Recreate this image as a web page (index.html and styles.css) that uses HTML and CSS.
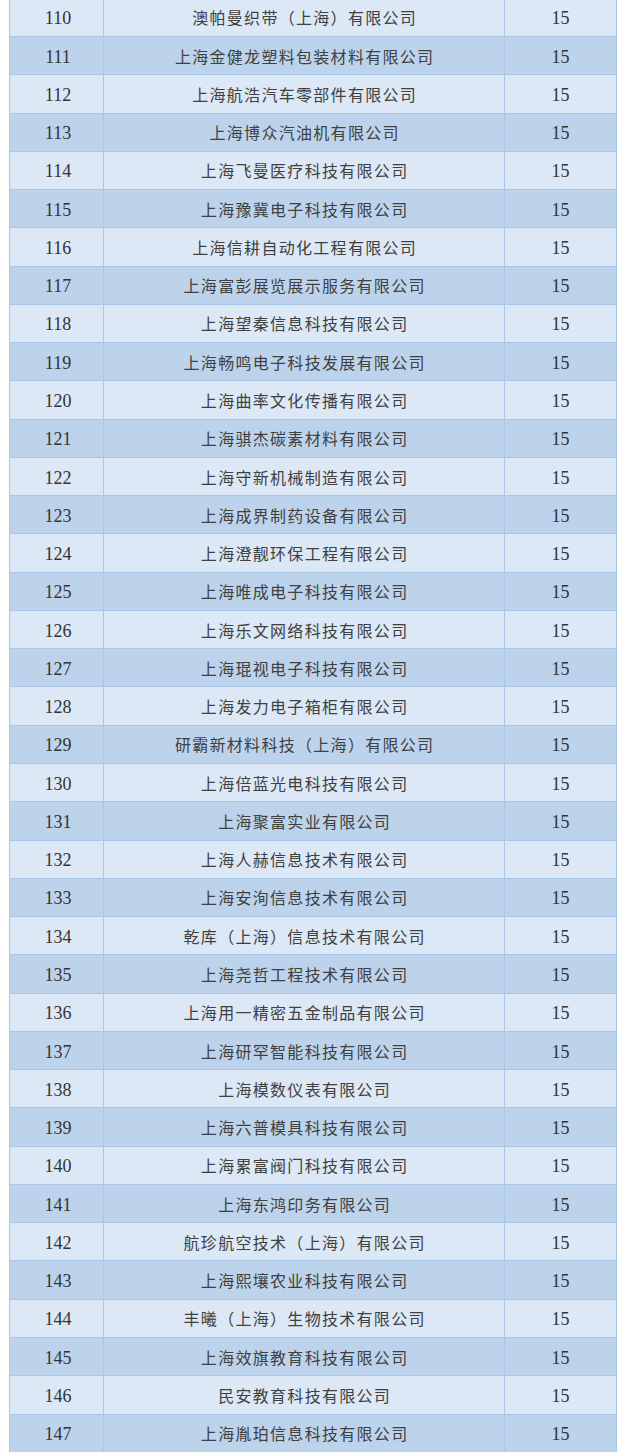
FILE: index.html
```html
<!DOCTYPE html>
<html lang="zh">
<head>
<meta charset="utf-8">
<link rel="stylesheet" href="styles.css">
</head>
<body>
<div class="table">
<div class="row light"><div class="c num">110</div><div class="c name">澳帕曼织带（上海）有限公司</div><div class="c score">15</div></div>
<div class="row dark"><div class="c num">111</div><div class="c name">上海金健龙塑料包装材料有限公司</div><div class="c score">15</div></div>
<div class="row light"><div class="c num">112</div><div class="c name">上海航浩汽车零部件有限公司</div><div class="c score">15</div></div>
<div class="row dark"><div class="c num">113</div><div class="c name">上海博众汽油机有限公司</div><div class="c score">15</div></div>
<div class="row light"><div class="c num">114</div><div class="c name">上海飞曼医疗科技有限公司</div><div class="c score">15</div></div>
<div class="row dark"><div class="c num">115</div><div class="c name">上海豫冀电子科技有限公司</div><div class="c score">15</div></div>
<div class="row light"><div class="c num">116</div><div class="c name">上海信耕自动化工程有限公司</div><div class="c score">15</div></div>
<div class="row dark"><div class="c num">117</div><div class="c name">上海富彭展览展示服务有限公司</div><div class="c score">15</div></div>
<div class="row light"><div class="c num">118</div><div class="c name">上海望秦信息科技有限公司</div><div class="c score">15</div></div>
<div class="row dark"><div class="c num">119</div><div class="c name">上海畅鸣电子科技发展有限公司</div><div class="c score">15</div></div>
<div class="row light"><div class="c num">120</div><div class="c name">上海曲率文化传播有限公司</div><div class="c score">15</div></div>
<div class="row dark"><div class="c num">121</div><div class="c name">上海骐杰碳素材料有限公司</div><div class="c score">15</div></div>
<div class="row light"><div class="c num">122</div><div class="c name">上海守新机械制造有限公司</div><div class="c score">15</div></div>
<div class="row dark"><div class="c num">123</div><div class="c name">上海成界制药设备有限公司</div><div class="c score">15</div></div>
<div class="row light"><div class="c num">124</div><div class="c name">上海澄靓环保工程有限公司</div><div class="c score">15</div></div>
<div class="row dark"><div class="c num">125</div><div class="c name">上海唯成电子科技有限公司</div><div class="c score">15</div></div>
<div class="row light"><div class="c num">126</div><div class="c name">上海乐文网络科技有限公司</div><div class="c score">15</div></div>
<div class="row dark"><div class="c num">127</div><div class="c name">上海琨视电子科技有限公司</div><div class="c score">15</div></div>
<div class="row light"><div class="c num">128</div><div class="c name">上海发力电子箱柜有限公司</div><div class="c score">15</div></div>
<div class="row dark"><div class="c num">129</div><div class="c name">研霸新材料科技（上海）有限公司</div><div class="c score">15</div></div>
<div class="row light"><div class="c num">130</div><div class="c name">上海倍蓝光电科技有限公司</div><div class="c score">15</div></div>
<div class="row dark"><div class="c num">131</div><div class="c name">上海聚富实业有限公司</div><div class="c score">15</div></div>
<div class="row light"><div class="c num">132</div><div class="c name">上海人赫信息技术有限公司</div><div class="c score">15</div></div>
<div class="row dark"><div class="c num">133</div><div class="c name">上海安洵信息技术有限公司</div><div class="c score">15</div></div>
<div class="row light"><div class="c num">134</div><div class="c name">乾库（上海）信息技术有限公司</div><div class="c score">15</div></div>
<div class="row dark"><div class="c num">135</div><div class="c name">上海尧哲工程技术有限公司</div><div class="c score">15</div></div>
<div class="row light"><div class="c num">136</div><div class="c name">上海用一精密五金制品有限公司</div><div class="c score">15</div></div>
<div class="row dark"><div class="c num">137</div><div class="c name">上海研罕智能科技有限公司</div><div class="c score">15</div></div>
<div class="row light"><div class="c num">138</div><div class="c name">上海模数仪表有限公司</div><div class="c score">15</div></div>
<div class="row dark"><div class="c num">139</div><div class="c name">上海六普模具科技有限公司</div><div class="c score">15</div></div>
<div class="row light"><div class="c num">140</div><div class="c name">上海累富阀门科技有限公司</div><div class="c score">15</div></div>
<div class="row dark"><div class="c num">141</div><div class="c name">上海东鸿印务有限公司</div><div class="c score">15</div></div>
<div class="row light"><div class="c num">142</div><div class="c name">航珍航空技术（上海）有限公司</div><div class="c score">15</div></div>
<div class="row dark"><div class="c num">143</div><div class="c name">上海熙壤农业科技有限公司</div><div class="c score">15</div></div>
<div class="row light"><div class="c num">144</div><div class="c name">丰曦（上海）生物技术有限公司</div><div class="c score">15</div></div>
<div class="row dark"><div class="c num">145</div><div class="c name">上海效旗教育科技有限公司</div><div class="c score">15</div></div>
<div class="row light"><div class="c num">146</div><div class="c name">民安教育科技有限公司</div><div class="c score">15</div></div>
<div class="row dark"><div class="c num">147</div><div class="c name">上海胤珀信息科技有限公司</div><div class="c score">15</div></div>
</div>
</body>
</html>
```
FILE: styles.css
```css
html, body {
  margin: 0;
  padding: 0;
  background: #ffffff;
}
body {
  overflow: hidden;
  height: 1452px;
}
.table {
  margin-left: 9px;
  width: 608px;
  margin-top: -1.3px;
  border-left: 1px solid #a9c7e6;
  border-right: 1px solid #a9c7e6;
  box-sizing: border-box;
}
.row {
  display: grid;
  grid-template-columns: 93px 401px 1fr;
  height: 38.28px;
  box-sizing: border-box;
  border-bottom: 1px solid #a9c7e6;
}
.row.light { background: #dce8f5; }
.row.dark { background: #bcd3eb; }
.c {
  display: flex;
  align-items: center;
  justify-content: center;
  color: #3a3a3a;
}
.c + .c {
  border-left: 1px solid #a9c7e6;
}
.num, .score {
  font-family: "Liberation Serif", "DejaVu Serif", serif;
  font-size: 18px;
  padding-top: 3px;
  color: #333333;
}
.num {
  padding-left: 3px;
}
.name {
  font-family: "Noto Sans CJK SC", "Noto Sans", sans-serif;
  font-size: 16px;
  letter-spacing: 1.3px;
  color: #404040;
  padding-left: 1.3px;
}
```
